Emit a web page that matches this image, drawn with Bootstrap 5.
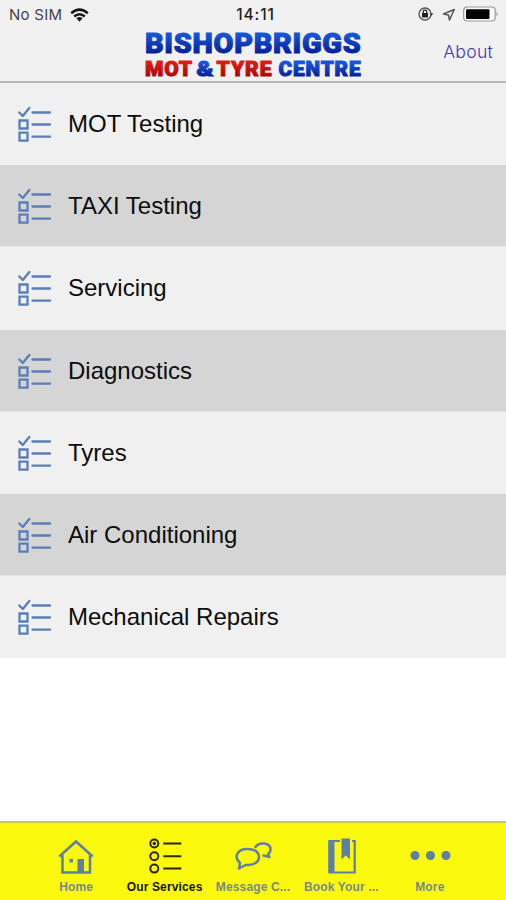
<!DOCTYPE html>
<html lang="en">
<head>
<meta charset="utf-8">
<meta name="viewport" content="width=device-width, initial-scale=1">
<title>Bishopbriggs MOT &amp; Tyre Centre</title>
<link href="https://cdn.jsdelivr.net/npm/bootstrap@5.3.0/dist/css/bootstrap.min.css" rel="stylesheet">
<style>
body{font-family:"Liberation Sans",Arial,sans-serif;color:#0c0c0c;background:#fff}
svg{display:block;flex:none}
.screen{height:900px;overflow:hidden}
.topbar{height:83px;background:#f1f1f1;border-bottom:2px solid #b4b4b4}
.status{height:28px;padding:1px 7px 0 9px;line-height:28px}
.status>div{flex:1 1 0}
.carrier{font-family:Inter,sans-serif;font-size:15px;color:#444;letter-spacing:.25px}
.clock{font-family:Inter,sans-serif;font-size:15.5px;font-weight:500;color:#222;letter-spacing:.9px;padding-left:3px}
.brandrow{height:53px}
.brandrow>div{flex:1 1 0}
.logo{overflow:visible}
.about{font-family:Inter,sans-serif;font-weight:300;font-size:17.6px;color:#4038b4;padding-right:13px;text-decoration:none;letter-spacing:.25px}
.service{height:82.2px;background:#f0f0f0;border:0;border-radius:0;padding:0 18px;gap:16px;font-size:24px;color:#0c0c0c}
.service:nth-child(even){background:#d5d5d5;box-shadow:inset 0 -1px #e6e6e6}
.ln{fill:none;stroke:#5b7db8;stroke-width:2.3;stroke-linecap:round;stroke-linejoin:round}
.tabs{height:79px;background:#fbf90b;border-top:2px solid #c9c860;padding:0 32px}
.tab{width:88.6px;padding-top:14px;gap:4px;font-size:12px;line-height:16px;font-weight:700;color:#78898a;text-decoration:none;white-space:nowrap;letter-spacing:.15px}
.tab.on{color:#161600}
</style>
</head>
<body>
<svg width="0" height="0" class="position-absolute" aria-hidden="true">
<symbol id="check" viewBox="0 0 34 36"><g class="ln"><path d="M1.300 6.500 4.800 10 11.300 2M14.500 6.500H32M14.500 18.500H32M14.500 30.700H32"/><path stroke-linejoin="miter" d="M1.500 14.500h8v8h-8zM1.500 26.700h8v8h-8z"/></g></symbol>
</svg>
<div class="screen d-flex flex-column">
<header class="topbar">
  <div class="status d-flex align-items-center">
    <div class="d-flex align-items-center gap-2"><span class="carrier">No SIM</span>
      <svg width="19" height="14" viewBox="0 0 19 14"><g fill="none" stroke="#151515" stroke-width="2.500"><path d="M1.200 5.200Q9.500-1.900 17.800 5.200M4.200 8.500Q9.500 3.900 14.800 8.500"/></g><path fill="#151515" d="M6.400 10.300Q9.500 7.700 12.600 10.300L9.500 13.700Z"/></svg>
    </div>
    <span class="clock">14:11</span>
    <div class="d-flex align-items-center justify-content-end">
      <svg width="82" height="18" viewBox="0 0 82 18">
        <circle cx="8" cy="8" r="6" fill="none" stroke="#555" stroke-width="1.400"/><path d="M12.400 7.200h4L14.400 10z" fill="#444"/>
        <path d="M6.200 7.500V6a1.800 1.800 0 0 1 3.600 0v1.500" fill="none" stroke="#222" stroke-width="1.200"/><path d="M5 7h6v4.500H5z" fill="#222"/>
        <path d="M37.300 3.500 26.500 8 31.500 9 32.500 14Z" fill="none" stroke="#555" stroke-width="1.500" stroke-linejoin="round"/>
        <rect x="46.700" y="1" width="31.500" height="14" rx="3.500" fill="#f8f8f8" stroke="#999" stroke-width="1.200"/>
        <rect x="49" y="3.300" width="23.500" height="9.700" rx="1" fill="#050505"/><path d="M79.500 5.500Q82 8 79.500 10.500Z" fill="#999"/>
      </svg>
    </div>
  </div>
  <div class="brandrow d-flex align-items-center">
    <div></div>
    <svg class="logo" width="218" height="53" viewBox="145 28 218 53" role="img" aria-label="Bishopbriggs MOT and Tyre Centre" font-family="Roboto, sans-serif" font-weight="900" stroke-linejoin="miter">
      <defs>
        <linearGradient id="blue" x1="0" y1="0" x2="0" y2="1"><stop offset=".25" stop-color="#1554d8"/><stop offset=".85" stop-color="#061b96"/></linearGradient>
        <linearGradient id="red" x1="0" y1="0" x2="0" y2="1"><stop offset=".2" stop-color="#dc1c14"/><stop offset=".85" stop-color="#a80604"/></linearGradient>
      </defs>
      <g fill="url(#blue)" stroke="url(#blue)" stroke-width="1">
        <text x="146" y="52.500" font-size="28.500" letter-spacing=".7" textLength="216.500" lengthAdjust="spacingAndGlyphs">BISHOPBRIGGS</text>
        <text x="197.500" y="75.700" font-size="19.500" textLength="17" lengthAdjust="spacingAndGlyphs">&amp;</text>
        <text x="279.500" y="75.700" font-size="19.800" letter-spacing=".9" textLength="83" lengthAdjust="spacingAndGlyphs">CENTRE</text>
      </g>
      <g fill="url(#red)" stroke="url(#red)" stroke-width="1">
        <text x="146" y="75.700" font-size="19.800" letter-spacing=".9" textLength="48" lengthAdjust="spacingAndGlyphs">MOT</text>
        <text x="217.500" y="75.700" font-size="19.800" letter-spacing=".9" textLength="56" lengthAdjust="spacingAndGlyphs">TYRE</text>
      </g>
    </svg>
    <div class="text-end pb-1"><a class="about" href="#">About</a></div>
  </div>
</header>
<main class="flex-grow-1">
  <div class="list-group list-group-flush">
    <a href="#" class="list-group-item service d-flex align-items-center"><svg width="34" height="36"><use href="#check"/></svg><span>MOT Testing</span></a>
    <a href="#" class="list-group-item service d-flex align-items-center"><svg width="34" height="36"><use href="#check"/></svg><span>TAXI Testing</span></a>
    <a href="#" class="list-group-item service d-flex align-items-center"><svg width="34" height="36"><use href="#check"/></svg><span>Servicing</span></a>
    <a href="#" class="list-group-item service d-flex align-items-center"><svg width="34" height="36"><use href="#check"/></svg><span>Diagnostics</span></a>
    <a href="#" class="list-group-item service d-flex align-items-center"><svg width="34" height="36"><use href="#check"/></svg><span>Tyres</span></a>
    <a href="#" class="list-group-item service d-flex align-items-center"><svg width="34" height="36"><use href="#check"/></svg><span>Air Conditioning</span></a>
    <a href="#" class="list-group-item service d-flex align-items-center"><svg width="34" height="36"><use href="#check"/></svg><span>Mechanical Repairs</span></a>
  </div>
</main>
<nav class="tabs d-flex">
  <a href="#" class="tab d-flex flex-column align-items-center">
    <svg width="38" height="38" viewBox="0 0 38 38"><g fill="none" stroke="#617ea6" stroke-width="2.500"><path d="M2.300 19.500 19 4.500 35.700 19.500M5.500 18V35.500H33V18" stroke-linejoin="miter"/></g><path d="M20.500 22h6.500v13h-6.500zM12.500 22h3.500v3.500h-3.500z" fill="#617ea6"/></svg>
    <span>Home</span></a>
  <a href="#" class="tab on d-flex flex-column align-items-center">
    <svg width="38" height="38" viewBox="0 0 38 38"><g fill="none" stroke="#292900" stroke-width="2"><circle cx="8.300" cy="6.500" r="4"/><circle cx="8.300" cy="19.200" r="4"/><circle cx="8.300" cy="31.600" r="4"/><path d="M17.300 6.500h18M17.300 19.200h18M17.300 31.600h18"/></g><circle cx="8.300" cy="6.500" r="1.700" fill="#292900"/></svg>
    <span>Our Services</span></a>
  <a href="#" class="tab d-flex flex-column align-items-center">
    <svg width="38" height="38" viewBox="0 0 38 38"><g fill="none" stroke="#617ea6" stroke-width="2.500" stroke-linejoin="round" stroke-linecap="round"><path d="M6 26C-1 19.500 4 12 13 12S25 16 25 20.500 19 28.800 11.500 28L5 31.500Z"/><path d="M21.500 10C25 4.500 36.500 5.500 36.500 12.500 36.500 14.500 35.500 16 34 17L35.500 20 29.500 18.500"/></g></svg>
    <span>Message C...</span></a>
  <a href="#" class="tab d-flex flex-column align-items-center">
    <svg width="38" height="38" viewBox="0 0 38 38"><path d="M18 4H7.500V35.500H32.700V4H30" fill="none" stroke="#617ea6" stroke-width="2.200"/><path d="M6.500 3.500h6v32h-6zM19.500 1.500h8.500v21L23.700 18.500 19.500 22.500z" fill="#617ea6"/></svg>
    <span>Book Your ...</span></a>
  <a href="#" class="tab d-flex flex-column align-items-center">
    <svg width="42" height="38" viewBox="0 0 42 38" fill="#617ea6"><circle cx="6" cy="18.500" r="4.500"/><circle cx="21.500" cy="18.500" r="4.500"/><circle cx="37" cy="18.500" r="4.500"/></svg>
    <span>More</span></a>
</nav>
</div>
<script src="https://cdn.jsdelivr.net/npm/bootstrap@5.3.0/dist/js/bootstrap.bundle.min.js"></script>
</body>
</html>
